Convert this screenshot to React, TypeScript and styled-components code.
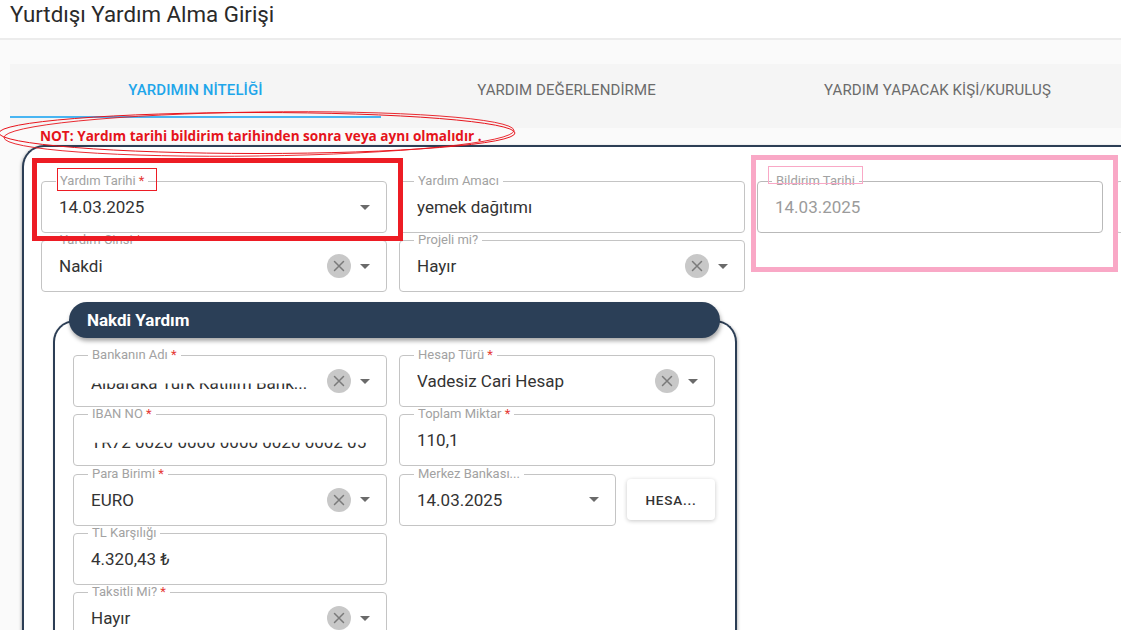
import React from "react";
import styled, { createGlobalStyle } from "styled-components";

const GlobalStyle = createGlobalStyle`
  html, body { margin: 0; padding: 0; }
  body {
    background: #fafafa;
    font-family: Roboto, "Noto Sans", "Liberation Sans", sans-serif;
    overflow: hidden;
  }
  * { box-sizing: border-box; }
`;

const Page = styled.div`
  position: relative;
  width: 1121px;
  height: 630px;
  overflow: hidden;
`;

const Header = styled.header`
  height: 40px;
  background: #fff;
  border-bottom: 2px solid #ececec;
  padding: 0 0 0 10px;
`;

const Title = styled.h1`
  margin: 0;
  font-size: 22.3px;
  font-weight: 400;
  line-height: 28px;
  color: #2a2a2a;
`;

const Content = styled.main`
  padding: 24px 0 0 10px;
`;

const TabBar = styled.nav`
  display: grid;
  grid-template-columns: repeat(3, 371px);
  height: 64px;
  padding-bottom: 10px;
  background: #f5f5f5;
`;

const Tab = styled.div<{ $active?: boolean }>`
  position: relative;
  display: flex;
  align-items: center;
  justify-content: center;
  font-size: 15px;
  font-weight: ${(p) => (p.$active ? 500 : 400)};
  color: ${(p) => (p.$active ? "#1fa6ea" : "#6b6b6b")};
  letter-spacing: 0.1px;
  border-bottom: 2px solid ${(p) => (p.$active ? "#48b5f2" : "transparent")};
`;

const Note = styled.div`
  height: 17px;
  padding-left: 30px;
  font-family: "Open Sans", "Liberation Sans", sans-serif;
  font-weight: 700;
  font-size: 13.6px;
  line-height: 15px;
  color: #e5141b;
  white-space: nowrap;
`;

const Card = styled.section`
  margin-left: 12px;
  height: 500px;
  border: 2px solid #2c3e55;
  border-right: none;
  border-bottom: none;
  border-radius: 22px 0 0 0;
  padding: 34px 0 0 17px;
  background: #fff;
  box-shadow: -1px 1px 3px rgba(0, 0, 0, 0.25);
`;

const MainGrid = styled.div`
  display: grid;
  grid-template-columns: repeat(4, 346px);
  column-gap: 12px;
  row-gap: 7px;
`;

const FieldBox = styled.div<{ $disabled?: boolean }>`
  position: relative;
  height: 52px;
  min-width: 0;
  border: 1px solid ${(p) => (p.$disabled ? "#b9b9b9" : "#c4c4c4")};
  border-radius: 4px;
  display: flex;
  align-items: center;
  padding-left: 17px;
  background: #fff;
`;

const Label = styled.span`
  position: absolute;
  top: -8px;
  left: 14px;
  padding: 0 4px;
  background: #fff;
  font-size: 13px;
  line-height: 14px;
  color: #a2a2a2;
  white-space: nowrap;
`;

const Star = styled.span`
  color: #e53935;
`;

const Value = styled.span<{ $disabled?: boolean; $hidden?: boolean }>`
  flex: 1;
  min-width: 0;
  font-size: 17px;
  color: ${(p) => (p.$disabled ? "#9b9b9b" : "#333")};
  white-space: nowrap;
  overflow: hidden;
  text-overflow: ${(p) => (p.$hidden ? "clip" : "ellipsis")};
  ${(p) => (p.$hidden ? "clip-path: inset(52% 0 0 0); transform: translateY(2px);" : "")}
`;

const ClearButton = styled.span`
  width: 24px;
  height: 24px;
  border-radius: 50%;
  background: #c8c8c8;
  display: flex;
  align-items: center;
  justify-content: center;
  margin-right: 9px;
  flex: none;
`;

const ArrowBox = styled.span`
  width: 10px;
  display: flex;
  margin-right: 16px;
  flex: none;
`;

const Section = styled.div`
  grid-column: 1 / span 2;
  width: 684px;
  margin: 3px 0 0 12px;
`;

const Pill = styled.div`
  position: relative;
  z-index: 1;
  height: 36px;
  margin: 0 17px 0 16px;
  padding-left: 18px;
  border-radius: 18px;
  background: #2b3f57;
  color: #fff;
  font-size: 17px;
  font-weight: 700;
  line-height: 36px;
  box-shadow: 1px 3px 4px rgba(0, 0, 0, 0.35);
`;

const SectionBody = styled.div`
  margin-top: -18px;
  height: 330px;
  border: 2px solid #2c3e55;
  border-bottom: none;
  border-radius: 22px 22px 0 0;
  padding: 33px 0 0 18px;
  box-shadow: 1px 1px 3px rgba(0, 0, 0, 0.25);
`;

const InnerGrid = styled.div`
  display: grid;
  grid-template-columns: 314px 316px;
  column-gap: 12px;
  row-gap: 7.25px;
`;

const SplitCell = styled.div`
  display: flex;
  align-items: center;
  gap: 11px;
`;

const ActionButton = styled.button`
  width: 88px;
  height: 41px;
  flex: none;
  border: none;
  border-radius: 4px;
  background: #fff;
  box-shadow: 0 1px 4px rgba(0, 0, 0, 0.22);
  font-family: Roboto, sans-serif;
  font-size: 13.5px;
  font-weight: 500;
  letter-spacing: 0.8px;
  color: #333;
  padding: 0;
`;

const Overlay = styled.svg`
  position: absolute;
  left: 0;
  top: 0;
  pointer-events: none;
`;

const Mark = styled.div<{ $color: string; $w: number }>`
  position: absolute;
  border: ${(p) => p.$w}px solid ${(p) => p.$color};
  pointer-events: none;
`;

const Arrow = () => (
  <ArrowBox>
    <svg width="10" height="5" viewBox="0 0 10 5">
      <path d="M0 0 L10 0 L5 5 Z" fill="#6a6a6a" />
    </svg>
  </ArrowBox>
);

const Clear = () => (
  <ClearButton>
    <svg width="12" height="12" viewBox="0 0 12 12">
      <path d="M1.5 1.5 L10.5 10.5 M10.5 1.5 L1.5 10.5" stroke="#7a7a7a" strokeWidth="1.5" strokeLinecap="round" />
    </svg>
  </ClearButton>
);

type FieldProps = {
  label?: string;
  required?: boolean;
  value?: string;
  clear?: boolean;
  arrow?: boolean;
  disabled?: boolean;
  hidden?: boolean;
  width?: number;
};

const Field = ({ label, required, value, clear, arrow, disabled, hidden, width }: FieldProps) => (
  <FieldBox $disabled={disabled} style={width ? { width } : undefined}>
    {label && (
      <Label>
        {label}
        {required && <Star> *</Star>}
      </Label>
    )}
    <Value $disabled={disabled} $hidden={hidden}>{value}</Value>
    {clear && <Clear />}
    {arrow && <Arrow />}
  </FieldBox>
);

export default function App() {
  return (
    <>
      <GlobalStyle />
      <Page>
        <Header>
          <Title>Yurtdışı Yardım Alma Girişi</Title>
        </Header>
        <Content>
          <TabBar>
            <Tab $active>YARDIMIN NİTELİĞİ</Tab>
            <Tab>YARDIM DEĞERLENDİRME</Tab>
            <Tab>YARDIM YAPACAK KİŞİ/KURULUŞ</Tab>
          </TabBar>
          <Note>NOT: Yardım tarihi bildirim tarihinden sonra veya aynı olmalıdır .</Note>
          <Card>
            <MainGrid>
              <Field label="Yardım Tarihi" required value="14.03.2025" arrow />
              <Field label="Yardım Amacı" value="yemek dağıtımı" />
              <Field label="Bildirim Tarihi" value="14.03.2025" disabled />
              <Field />
              <Field label="Yardım Cinsi" required value="Nakdi" clear arrow />
              <Field label="Projeli mi?" value="Hayır" clear arrow />
              <Section>
                <Pill>Nakdi Yardım</Pill>
                <SectionBody>
                  <InnerGrid>
                    <Field label="Bankanın Adı" required value="Albaraka Türk Katılım Bank..." clear arrow hidden />
                    <Field label="Hesap Türü" required value="Vadesiz Cari Hesap" clear arrow />
                    <Field label="IBAN NO" required value="TR72 0020 0000 0000 0020 0002 05" hidden />
                    <Field label="Toplam Miktar" required value="110,1" />
                    <Field label="Para Birimi" required value="EURO" clear arrow />
                    <SplitCell>
                      <Field label="Merkez Bankası..." value="14.03.2025" arrow width={218} />
                      <ActionButton>HESA...</ActionButton>
                    </SplitCell>
                    <Field label="TL Karşılığı" value="4.320,43 ₺" />
                    <div />
                    <Field label="Taksitli Mi?" required value="Hayır" clear arrow />
                  </InnerGrid>
                </SectionBody>
              </Section>
            </MainGrid>
          </Card>
        </Content>

        <Overlay width="1121" height="630" viewBox="0 0 1121 630">
          <ellipse cx="257" cy="133" rx="258" ry="20.5" fill="none" stroke="#e8141c" strokeWidth="1" />
          <ellipse cx="259" cy="134" rx="255" ry="22" fill="none" stroke="#e8141c" strokeWidth="0.9" transform="rotate(-0.8 259 134)" />
        </Overlay>
        <Mark $color="#ed1c24" $w={5} style={{ left: 32, top: 158, width: 371, height: 83 }} />
        <Mark $color="#ed1c24" $w={1} style={{ left: 57, top: 168, width: 100, height: 23 }} />
        <Mark $color="#f9a8c6" $w={5} style={{ left: 751, top: 155, width: 367, height: 117 }} />
        <Mark $color="#f9a8c6" $w={1} style={{ left: 768, top: 166, width: 95, height: 18 }} />
      </Page>
    </>
  );
}
